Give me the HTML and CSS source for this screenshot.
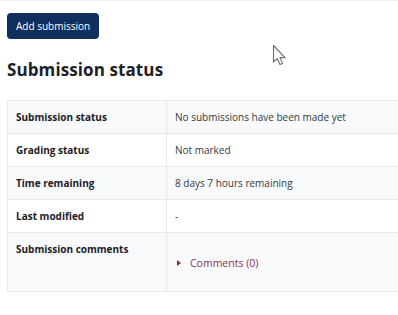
FILE: index.html
```html
<!DOCTYPE html>
<html lang="en">
<head>
<meta charset="utf-8">
<title>Submission status</title>
<link rel="stylesheet" href="styles.css">
</head>
<body>
<div class="page">
  <div class="actions">
    <button class="btn-primary" type="button">Add submission</button>
  </div>
  <h2 class="heading">Submission status</h2>
  <div class="table-wrap">
    <table class="status-table">
      <tbody>
        <tr class="odd">
          <th>Submission status</th>
          <td>No submissions have been made yet</td>
        </tr>
        <tr>
          <th>Grading status</th>
          <td>Not marked</td>
        </tr>
        <tr class="odd">
          <th>Time remaining</th>
          <td>8 days 7 hours remaining</td>
        </tr>
        <tr>
          <th>Last modified</th>
          <td>-</td>
        </tr>
        <tr class="odd">
          <th>Submission comments</th>
          <td>
            <div class="comments">
              <a class="comments-link" href="#"><span class="caret"></span>Comments (0)</a>
            </div>
          </td>
        </tr>
      </tbody>
    </table>
  </div>
  <svg class="cursor" width="16" height="24" viewBox="0 0 16 24">
    <path d="M1.5 1.5 L1.5 18 L5.3 14.6 L8 20.6 L10.6 19.4 L8 13.6 L13 13.6 Z" fill="#fff" stroke="#6b6b6b" stroke-width="1.1" stroke-linejoin="round"/>
  </svg>
</div>
</body>
</html>
```
FILE: styles.css
```css
html, body {
  margin: 0;
  padding: 0;
  background: #fff;
  overflow: hidden;
}
body {
  font-family: "Open Sans", "Noto Sans", sans-serif;
  color: #1d2125;
}
.page {
  position: relative;
  border-top: 1px solid #f0f0f0;
  padding: 12px 0 0 7px;
  width: 600px;
}
.actions {
  display: flex;
}
.btn-primary {
  font-family: "Open Sans", "Noto Sans", sans-serif;
  font-size: 10px;
  line-height: 16px;
  height: 26px;
  padding: 0 9px;
  border: 0;
  border-radius: 4px;
  background: #0f2f5f;
  color: #fff;
}
.heading {
  margin: 19px 0 18px 0;
  font-size: 17px;
  line-height: 24px;
  font-weight: 700;
  letter-spacing: 0.1px;
}
.status-table {
  border-collapse: collapse;
  width: 560px;
  font-size: 10px;
  line-height: 16px;
}
.status-table th,
.status-table td {
  border: 1px solid #e6e8ea;
  padding: 8px 8px;
  text-align: left;
  vertical-align: top;
}
.status-table th {
  width: 142px;
  font-weight: 700;
}
.status-table td {
  color: #343a40;
}
.status-table tr.odd {
  background: #f8f9fa;
}
.comments {
  padding: 13px 0 12px 0;
}
.comments-link {
  color: #8f3356;
  text-decoration: none;
  display: inline-flex;
  align-items: center;
  font-size: 10.5px;
}
.caret {
  width: 0;
  height: 0;
  border-left: 4px solid #8f2540;
  border-top: 3.5px solid transparent;
  border-bottom: 3.5px solid transparent;
  margin: 0 9px 0 2px;
}
.cursor {
  position: absolute;
  left: 272px;
  top: 43px;
}
```
